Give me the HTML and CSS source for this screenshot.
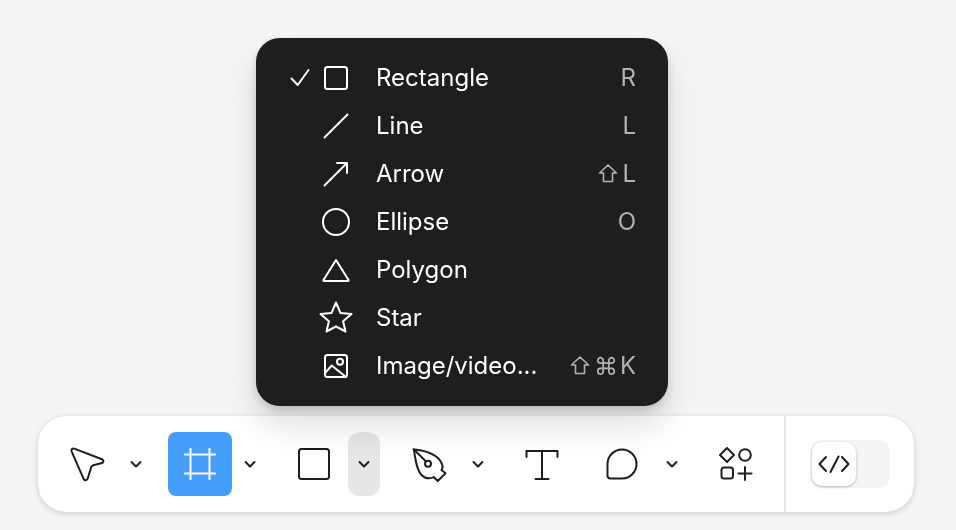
FILE: index.html
```html
<!DOCTYPE html>
<html lang="en">
  <head>
    <meta charset="UTF-8" />
    <meta name="viewport" content="width=device-width, initial-scale=1.0" />
    <title>Toolbar</title>
    <link rel="stylesheet" href="styles.css">
  </head>
  <body>
    <div class="toolbar">
      <!-- shape menu, opens above the toolbar -->
      <ul class="menu">
        <li class="menu-row">
          <svg class="check" viewBox="0 0 24 24"><path d="M3.5 12.5 9.7 19 20.5 4"/></svg>
          <svg class="icon" viewBox="0 0 48 48"><rect x="13" y="13" width="22" height="22" rx="2.5"/></svg>
          <span class="label">Rectangle</span>
          <span class="keys">R</span>
        </li>
        <li class="menu-row">
          <span class="check"></span>
          <svg class="icon" viewBox="0 0 48 48"><path d="M12.5 35.5 35.5 12.5"/></svg>
          <span class="label">Line</span>
          <span class="keys">L</span>
        </li>
        <li class="menu-row">
          <span class="check"></span>
          <svg class="icon" viewBox="0 0 48 48"><path d="M12.5 35.5 35 13M25 13H35V23"/></svg>
          <span class="label">Arrow</span>
          <span class="keys">
            <svg class="shift" viewBox="0 0 20 20"><path d="M10 2 18.5 10H14.5V18.5H5.5V10H1.500Z"/></svg>
            L
          </span>
        </li>
        <li class="menu-row">
          <span class="check"></span>
          <svg class="icon" viewBox="0 0 48 48"><circle cx="24" cy="24" r="13"/></svg>
          <span class="label">Ellipse</span>
          <span class="keys">O</span>
        </li>
        <li class="menu-row">
          <span class="check"></span>
          <svg class="icon" viewBox="0 0 48 48"><path d="M24 14 36.5 34A.6.6 0 0 1 36 35H12A.6.6 0 0 1 11.5 34Z"/></svg>
          <span class="label">Polygon</span>
          <span class="keys"></span>
        </li>
        <li class="menu-row">
          <span class="check"></span>
          <svg class="icon" viewBox="0 0 48 48"><path d="M24 8.5 28.4 18.900 39.5 20.100 31.100 27.300 33.500 37.500 24 32.500 14.500 37.500 16.900 27.300 8.500 20.100 19.600 18.900Z"/></svg>
          <span class="label">Star</span>
          <span class="keys"></span>
        </li>
        <li class="menu-row">
          <span class="check"></span>
          <svg class="icon" viewBox="0 0 48 48"><rect x="13" y="13" width="22" height="22" rx="2.5"/><circle cx="28" cy="19.7" r="3"/><path d="M13 31 19.7 23.500 34 35"/></svg>
          <span class="label">Image/video...</span>
          <span class="keys">
            <svg class="shift" viewBox="0 0 20 20"><path d="M10 2 18.5 10H14.5V18.5H5.5V10H1.500Z"/></svg>
            <i class="sym">⌘</i>
            K
          </span>
        </li>
      </ul>

      <div class="tools">
        <button class="tool">
          <svg viewBox="0 0 48 48"><path d="M9.600 11.300C9 9.300 10.500 8 12.300 8.600L40 19.200C42 20 41.900 22.500 40 23L31.200 25.200C30.200 25.500 29.600 26 29.300 27L25.700 38.500C25 40.800 22.300 40.900 21.500 38.600Z"/></svg>
        </button>
        <button class="caret"><svg viewBox="0 0 16 16"><path d="M3.5 6 8 10.5 12.5 6"/></svg></button>

        <button class="tool active">
          <svg viewBox="0 0 48 48"><path d="M14.500 8V40M33.500 8V40M8 14.500H40M8 33.500H40"/></svg>
        </button>
        <button class="caret"><svg viewBox="0 0 16 16"><path d="M3.5 6 8 10.5 12.5 6"/></svg></button>

        <button class="tool">
          <svg viewBox="0 0 48 48"><rect x="9" y="9" width="30" height="30" rx="2.500"/></svg>
        </button>
        <button class="caret open"><svg viewBox="0 0 16 16"><path d="M3.5 6 8 10.5 12.5 6"/></svg></button>

        <button class="tool">
          <svg viewBox="0 0 48 48"><path d="M10 10C9 9 9.500 9 11 9.500C24 11 33 15 37 22C39 25.500 39 28 37.500 30L41.500 33.300 33.700 41 29.700 37C27 38.500 24 38.800 21 37.500C14.500 35 12 25 10 10Z"/><circle cx="24" cy="23.700" r="3"/><path d="M10.500 10 22 21.500"/></svg>
        </button>
        <button class="caret"><svg viewBox="0 0 16 16"><path d="M3.5 6 8 10.5 12.5 6"/></svg></button>

        <button class="tool">
          <svg viewBox="0 0 48 48"><path d="M8.500 17V11H39.500V17M24 11V39M17.500 39H30.500"/></svg>
        </button>

        <button class="tool">
          <svg viewBox="0 0 48 48"><path d="M24 9.500A14.500 14.500 0 0 1 24 38.500H12.500A3 3 0 0 1 9.500 35.500V24A14.500 14.500 0 0 1 24 9.500Z"/></svg>
        </button>
        <button class="caret"><svg viewBox="0 0 16 16"><path d="M3.5 6 8 10.5 12.5 6"/></svg></button>

        <button class="tool last">
          <svg viewBox="0 0 48 48"><path d="M15 8 22 15 15 22 8 15Z"/><circle cx="33" cy="15" r="5.800"/><rect x="9.500" y="27.500" width="11.500" height="11" rx="2.500"/><path d="M33 27V40M26.500 33.500H39.500"/></svg>
        </button>
      </div>

      <div class="mode">
        <div class="switch">
          <button class="knob">
            <svg viewBox="0 0 32 32"><path d="M8 9 1.500 16 8 23M20.500 8.500 12.500 24M24 9 30.500 16 24 23"/></svg>
          </button>
        </div>
      </div>
    </div>
  </body>
</html>
```

FILE: styles.css
```css
body {
  margin: 0;
  height: 530px;
  overflow: hidden;
  box-sizing: border-box;
  background-color: #f5f5f5;
  font-family: "Inter", sans-serif;
  display: flex;
  flex-direction: column;
  justify-content: flex-end;
  align-items: flex-start;
  padding: 0 0 18px 38px;
}

svg {
  fill: none;
  stroke: #1e1e1e;
  stroke-width: 2;
  stroke-linejoin: round;
  stroke-linecap: round;
  display: block;
}

button {
  border: none;
  background: none;
  padding: 0;
  display: flex;
  align-items: center;
  justify-content: center;
}

/* toolbar */
.toolbar {
  position: relative;
  width: 876px;
  height: 96px;
  display: flex;
  background-color: #fff;
  border-radius: 28px;
  box-shadow: 0 2px 6px rgba(0, 0, 0, 0.15), 0 0 1px rgba(0, 0, 0, 0.15);
}

.tools {
  display: flex;
  align-items: center;
  padding: 0 16px;
}

.tool {
  width: 64px;
  height: 64px;
  border-radius: 8px;
  margin-right: 16px;
}

.tool svg {
  width: 48px;
  height: 48px;
}

.tool:has(+ .caret) {
  margin-right: 2px;
}

.tool.last {
  margin-right: 0;
}

.active {
  background-color: #439df9;
}

.active svg {
  stroke: #fff;
  stroke-linecap: butt;
}

.caret {
  width: 32px;
  height: 64px;
  border-radius: 12px;
  margin-right: 16px;
}

.caret svg {
  width: 16px;
  height: 16px;
}

.caret.open {
  background-color: #e6e6e6;
}

.mode {
  flex: 1;
  border-left: 2px solid #e6e6e6;
  display: flex;
  align-items: center;
  padding-left: 24px;
}

.switch {
  width: 80px;
  height: 48px;
  padding: 2px;
  box-sizing: border-box;
  background-color: #f5f5f5;
  border-radius: 12px;
}

.knob {
  width: 44px;
  height: 44px;
  background-color: #fff;
  border-radius: 10px;
  box-shadow: 0 1px 3px rgba(0, 0, 0, 0.25);
}

.knob svg {
  width: 32px;
  height: 32px;
}

/* shape menu */
.menu {
  position: absolute;
  left: 218px;
  bottom: 106px;
  z-index: 2;
  width: 412px;
  margin: 0;
  padding: 16px 32px;
  box-sizing: border-box;
  list-style: none;
  background-color: #1e1e1e;
  border-radius: 24px;
  box-shadow: 0 4px 10px rgba(0, 0, 0, 0.15), 0 20px 32px rgba(0, 0, 0, 0.12), 0 0 1px rgba(0, 0, 0, 0.12);
  will-change: transform;
}

.menu svg {
  stroke: #fff;
}

.menu .shift {
  stroke: #b3b3b3;
  stroke-width: 1.6;
  width: 20px;
  height: 20px;
}

.menu-row {
  height: 48px;
  display: flex;
  align-items: center;
  color: #fff;
  font-size: 24px;
}

.check {
  width: 24px;
  height: 24px;
  flex: none;
}

.icon {
  width: 48px;
  height: 48px;
  flex: none;
  margin-right: 16px;
}

.label {
  flex: 1;
  padding-bottom: 2px;
}

.keys {
  display: flex;
  align-items: center;
  gap: 4px;
  color: #b3b3b3;
  padding-bottom: 2px;
}

.sym {
  font-family: "DejaVu Sans", sans-serif;
  font-style: normal;
  font-size: 24px;
  line-height: 1;
  padding-top: 3px;
  margin-right: -2px;
}
```
